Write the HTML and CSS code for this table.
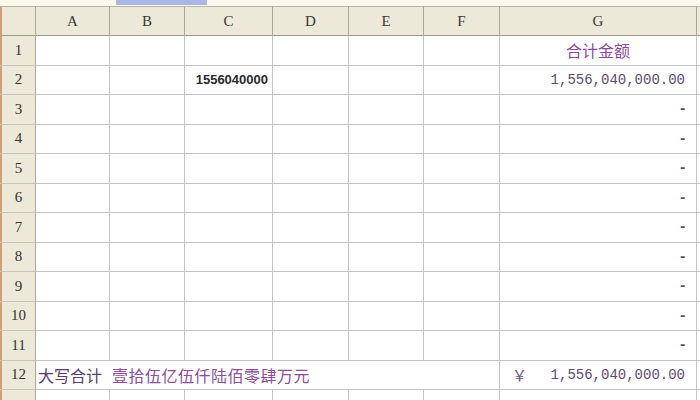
FILE: index.html
```html
<!DOCTYPE html>
<html>
<head>
<meta charset="utf-8">
<link rel="stylesheet" href="styles.css">
</head>
<body>
<div class="topstrip"><div class="tab"></div></div>
<div class="sheet">
  <div class="corner"></div>
  <div class="colhdr">A</div>
  <div class="colhdr">B</div>
  <div class="colhdr">C</div>
  <div class="colhdr">D</div>
  <div class="colhdr">E</div>
  <div class="colhdr">F</div>
  <div class="colhdr">G</div>
  <div class="colhdr tail"></div>

  <div class="rowhdr">1</div>
  <div class="cell"></div><div class="cell"></div><div class="cell"></div><div class="cell"></div><div class="cell"></div><div class="cell"></div>
  <div class="cell title">合计金额</div><div class="cell tail"></div>

  <div class="rowhdr">2</div>
  <div class="cell"></div><div class="cell"></div><div class="cell num">1556040000</div><div class="cell"></div><div class="cell"></div><div class="cell"></div>
  <div class="cell money">1,556,040,000.00</div><div class="cell tail"></div>

  <div class="rowhdr">3</div>
  <div class="cell"></div><div class="cell"></div><div class="cell"></div><div class="cell"></div><div class="cell"></div><div class="cell"></div>
  <div class="cell dash">-</div><div class="cell tail"></div>

  <div class="rowhdr">4</div>
  <div class="cell"></div><div class="cell"></div><div class="cell"></div><div class="cell"></div><div class="cell"></div><div class="cell"></div>
  <div class="cell dash">-</div><div class="cell tail"></div>

  <div class="rowhdr">5</div>
  <div class="cell"></div><div class="cell"></div><div class="cell"></div><div class="cell"></div><div class="cell"></div><div class="cell"></div>
  <div class="cell dash">-</div><div class="cell tail"></div>

  <div class="rowhdr">6</div>
  <div class="cell"></div><div class="cell"></div><div class="cell"></div><div class="cell"></div><div class="cell"></div><div class="cell"></div>
  <div class="cell dash">-</div><div class="cell tail"></div>

  <div class="rowhdr">7</div>
  <div class="cell"></div><div class="cell"></div><div class="cell"></div><div class="cell"></div><div class="cell"></div><div class="cell"></div>
  <div class="cell dash">-</div><div class="cell tail"></div>

  <div class="rowhdr">8</div>
  <div class="cell"></div><div class="cell"></div><div class="cell"></div><div class="cell"></div><div class="cell"></div><div class="cell"></div>
  <div class="cell dash">-</div><div class="cell tail"></div>

  <div class="rowhdr">9</div>
  <div class="cell"></div><div class="cell"></div><div class="cell"></div><div class="cell"></div><div class="cell"></div><div class="cell"></div>
  <div class="cell dash">-</div><div class="cell tail"></div>

  <div class="rowhdr">10</div>
  <div class="cell"></div><div class="cell"></div><div class="cell"></div><div class="cell"></div><div class="cell"></div><div class="cell"></div>
  <div class="cell dash">-</div><div class="cell tail"></div>

  <div class="rowhdr">11</div>
  <div class="cell"></div><div class="cell"></div><div class="cell"></div><div class="cell"></div><div class="cell"></div><div class="cell"></div>
  <div class="cell dash">-</div><div class="cell tail"></div>

  <div class="rowhdr">12</div>
  <div class="cell label">大写合计</div>
  <div class="cell words">壹拾伍亿伍仟陆佰零肆万元</div>
  <div class="cell total"><span class="yen">￥</span><span>1,556,040,000.00</span></div><div class="cell tail"></div>

  <div class="rowhdr"></div>
  <div class="cell"></div><div class="cell"></div><div class="cell"></div><div class="cell"></div><div class="cell"></div><div class="cell"></div>
  <div class="cell"></div><div class="cell tail"></div>
</div>
</body>
</html>
```

FILE: styles.css
```css
html, body {
  margin: 0;
  padding: 0;
  background: #ffffff;
  overflow: hidden;
  width: 700px;
  height: 400px;
}

.topstrip {
  height: 6px;
  background: #fbf8ee;
  border-bottom: 1px solid #b9b4a2;
  position: relative;
}

.tab {
  position: absolute;
  left: 116px;
  top: 0;
  width: 91px;
  height: 5px;
  background: #a9b6e6;
}

.sheet {
  display: grid;
  grid-template-columns: 36px 74px 75px 88px 76px 75px 76px 197px 3px;
  grid-template-rows: 29px repeat(12, 29.5px) 29.5px;
}

.sheet > div {
  box-sizing: border-box;
}

.corner,
.colhdr {
  background: #ece9d8;
  border-right: 1px solid #aca899;
  border-bottom: 1px solid #9d9a8c;
  font-family: "Liberation Serif", serif;
  font-size: 15px;
  color: #3a3a3a;
  display: flex;
  align-items: center;
  justify-content: center;
}

.corner {
  box-shadow: inset 2px 0 0 #c9a27c;
}

.colhdr.tail {
  border-right: none;
}

.rowhdr {
  background: #ece9d8;
  border-right: 1px solid #aca899;
  border-bottom: 1px solid #c9c6b8;
  box-shadow: inset 2px 0 0 #c9a27c;
  font-family: "Liberation Serif", serif;
  font-size: 15px;
  color: #333;
  display: flex;
  align-items: center;
  justify-content: center;
  padding-left: 2px;
}

.cell {
  border-right: 1px solid #c4c4c4;
  border-bottom: 1px solid #c4c4c4;
  display: flex;
  align-items: center;
  white-space: nowrap;
}

.cell.tail {
  border-right: none;
}

.title {
  justify-content: center;
  font-family: "Noto Sans CJK SC", sans-serif;
  font-size: 16px;
  color: #8a4a98;
}

.num {
  justify-content: flex-end;
  padding-right: 4px;
  font-family: "Liberation Sans", sans-serif;
  font-weight: bold;
  font-size: 13px;
  color: #2a2a2a;
}

.money {
  justify-content: flex-end;
  padding-right: 11px;
  font-family: "Liberation Mono", monospace;
  font-size: 14px;
  color: #5e4c6e;
}

.dash {
  justify-content: flex-end;
  padding-right: 9px;
  font-family: "Liberation Mono", monospace;
  font-weight: bold;
  font-size: 14px;
  color: #555;
}

.label {
  border-right: none;
  padding-left: 2px;
  font-family: "Noto Sans CJK SC", sans-serif;
  font-size: 16px;
  color: #5b3c70;
}

.words {
  grid-column: span 5;
  padding-left: 2px;
  font-family: "Noto Sans CJK SC", sans-serif;
  font-size: 16px;
  letter-spacing: 0.5px;
  color: #8b4f96;
}

.total {
  justify-content: space-between;
  padding-left: 12px;
  padding-right: 11px;
  font-family: "Liberation Mono", monospace;
  font-size: 14px;
  color: #5e4c6e;
}

.yen {
  font-family: "Noto Sans CJK SC", sans-serif;
  font-size: 15px;
  color: #6a5878;
}
```
